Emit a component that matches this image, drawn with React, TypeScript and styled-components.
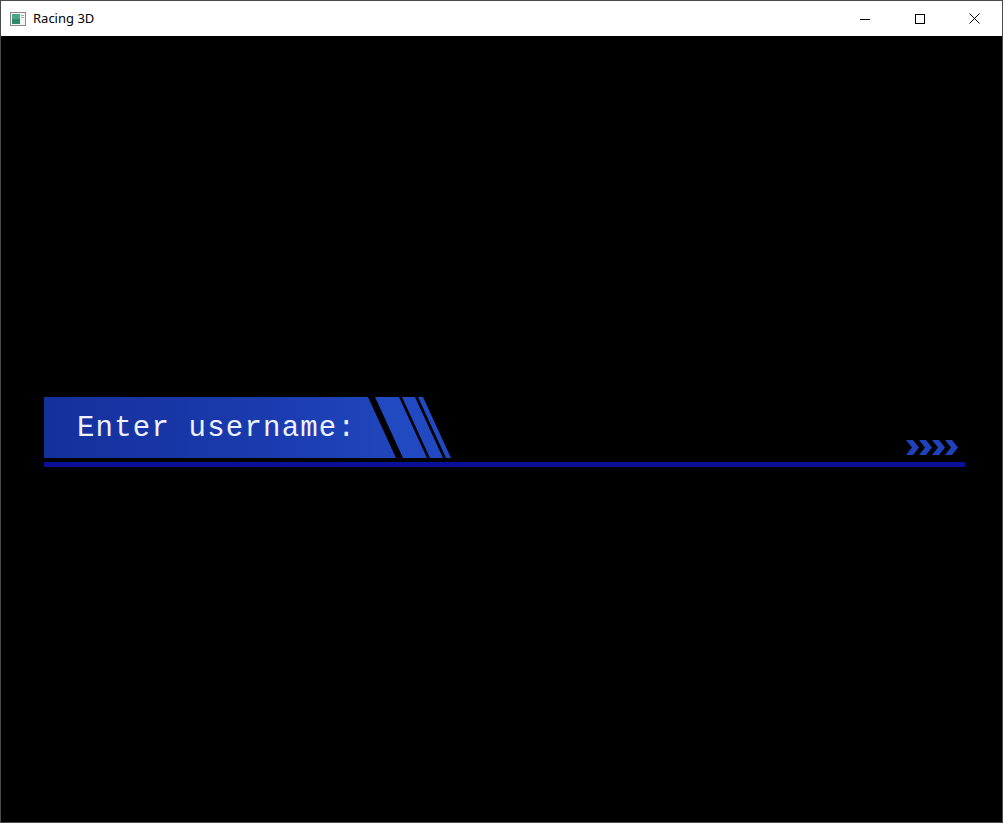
import React from "react";
import styled, { createGlobalStyle } from "styled-components";

const Global = createGlobalStyle`
  html, body { margin: 0; padding: 0; background: #000; }
  #root { width: 1003px; height: 823px; }
  * { box-sizing: border-box; }
`;

const Frame = styled.div`
  width: 1003px;
  height: 823px;
  display: flex;
  flex-direction: column;
  border: 1px solid #4a4a4a;
  background: #000;
  overflow: hidden;
`;

const TitleBar = styled.div`
  height: 35px;
  flex: none;
  background: #fff;
  display: flex;
  align-items: center;
`;

const AppIcon = styled.svg`
  width: 16px;
  height: 16px;
  margin-left: 9px;
  margin-right: 7px;
`;

const Title = styled.span`
  font-family: "Noto Sans", "Liberation Sans", sans-serif;
  font-size: 13px;
  color: #000;
  flex: 1;
  margin-top: -1px;
`;

const Controls = styled.div`
  display: flex;
  height: 100%;
`;

const ControlButton = styled.div`
  width: 55px;
  height: 100%;
  display: flex;
  align-items: center;
  justify-content: center;
`;

const Viewport = styled.div`
  flex: 1;
  background: #000;
  padding: 361px 37px 0 43px;
  display: flex;
  flex-direction: column;
`;

const BannerRow = styled.div`
  height: 61px;
  display: flex;
  align-items: stretch;
  padding-right: 7px;
`;

const Plate = styled.div`
  width: 352px;
  height: 61px;
  flex: none;
  background: linear-gradient(90deg, #14309b 0%, #1a3aad 60%, #2046bd 100%);
  clip-path: polygon(0 0, 324px 0, 352px 100%, 0 100%);
  display: flex;
  align-items: center;
  padding-left: 33px;
  padding-top: 1px;
`;

const Label = styled.span`
  font-family: "Liberation Mono", "DejaVu Sans Mono", monospace;
  font-size: 29px;
  letter-spacing: 1.2px;
  color: #eef1ff;
  white-space: pre;
`;

const Stripes = styled.svg`
  flex: none;
  margin-left: -21px;
`;

const Spacer = styled.div`
  flex: 1;
`;

const Chevrons = styled.svg`
  flex: none;
  align-self: flex-end;
  margin-bottom: 3px;
`;

const Rule = styled.div`
  margin-top: 4px;
  height: 5px;
  width: 921px;
  background: #0a1198;
`;

export default function App() {
  return (
    <>
      <Global />
      <Frame>
        <TitleBar>
          <AppIcon viewBox="0 0 16 16">
            <rect x="0.5" y="1.5" width="15" height="13" fill="#f4f4f4" stroke="#8a8a8a" />
            <rect x="2" y="3" width="8" height="10" fill="#2e8a6a" />
            <rect x="2" y="3" width="8" height="5" fill="#4da58a" />
            <rect x="11" y="4" width="3" height="1" fill="#9ab" />
            <rect x="11" y="6" width="3" height="1" fill="#9ab" />
          </AppIcon>
          <Title>Racing 3D</Title>
          <Controls>
            <ControlButton>
              <svg width="10" height="10" viewBox="0 0 10 10">
                <line x1="0" y1="5.5" x2="10" y2="5.5" stroke="#000" strokeWidth="1" />
              </svg>
            </ControlButton>
            <ControlButton>
              <svg width="10" height="10" viewBox="0 0 10 10">
                <rect x="0.5" y="0.5" width="9" height="9" fill="none" stroke="#000" strokeWidth="1" />
              </svg>
            </ControlButton>
            <ControlButton>
              <svg width="11" height="11" viewBox="0 0 11 11">
                <path d="M0.5 0.5 L10.5 10.5 M10.5 0.5 L0.5 10.5" stroke="#000" strokeWidth="1" />
              </svg>
            </ControlButton>
          </Controls>
        </TitleBar>
        <Viewport>
          <BannerRow>
            <Plate>
              <Label>Enter username:</Label>
            </Plate>
            <Stripes width="76" height="61" viewBox="0 0 76 61">
              <polygon points="0,0 24,0 52,61 28,61" fill="#2149c2" />
              <polygon points="27,0 40,0 68,61 55,61" fill="#2149c2" />
              <polygon points="43,0 48,0 76,61 71,61" fill="#2149c2" />
            </Stripes>
            <Spacer />
            <Chevrons width="52" height="15" viewBox="0 0 52 15">
              {[0, 13, 26, 39].map((x) => (
                <polygon
                  key={x}
                  points={`${x},0 ${x + 7},0 ${x + 13},7.5 ${x + 7},15 ${x},15 ${x + 6},7.5`}
                  fill="#1f42bb"
                />
              ))}
            </Chevrons>
          </BannerRow>
          <Rule />
        </Viewport>
      </Frame>
    </>
  );
}
